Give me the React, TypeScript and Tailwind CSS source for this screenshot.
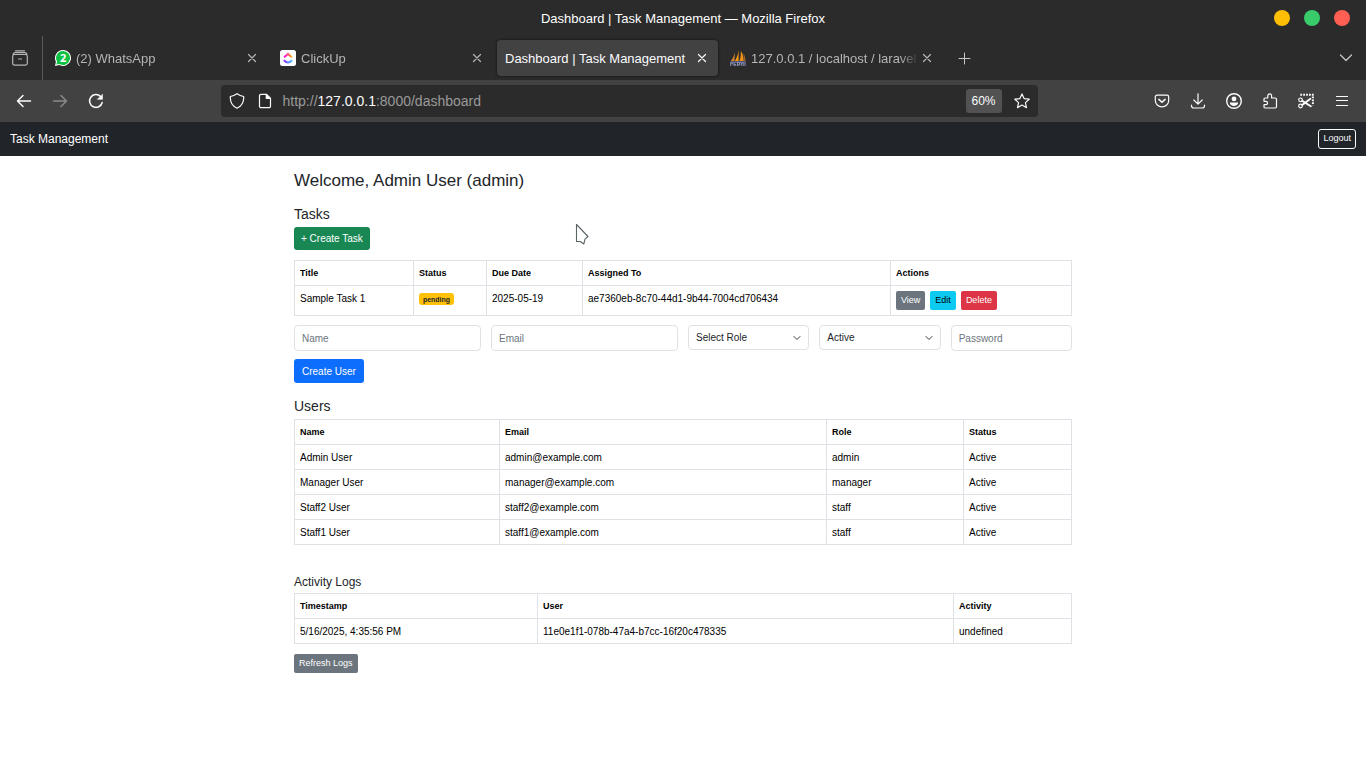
import React from "react";

type IconProps = { children: React.ReactNode; className?: string };

function Icon({ children, className = "" }: IconProps) {
  return (
    <svg
      aria-hidden="true"
      viewBox="0 0 16 16"
      className={`h-4 w-4 shrink-0 ${className}`}
      fill="none"
      stroke="currentColor"
      strokeWidth="1.2"
      strokeLinecap="round"
      strokeLinejoin="round"
    >
      {children}
    </svg>
  );
}

function IconButton({
  label,
  disabled,
  children,
}: {
  label: string;
  disabled?: boolean;
  children: React.ReactNode;
}) {
  return (
    <button
      type="button"
      aria-label={label}
      disabled={disabled}
      className="flex h-8 w-9 shrink-0 items-center justify-center text-[#fbfbfe] disabled:text-[#8a8a8c]"
    >
      <Icon>{children}</Icon>
    </button>
  );
}

const whatsAppIcon = (
  <svg aria-hidden="true" viewBox="0 0 16 16" className="h-4 w-4 shrink-0">
    <path d="M8 0a8 8 0 1 1-3.7 15.1L0 16l.9-4.2A8 8 0 0 1 8 0Z" fill="#fff" />
    <path d="M8.1 1.1a6.9 6.9 0 1 1-3.6 12.8l-3.1.7.7-3A6.9 6.9 0 0 1 8.1 1.1Z" fill="#0fc143" />
    <text x="8.1" y="11.8" textAnchor="middle" fontFamily="Open Sans, sans-serif" fontWeight="700" fontSize="11" fill="#fff">
      2
    </text>
  </svg>
);

const clickUpIcon = (
  <svg aria-hidden="true" viewBox="0 0 16 16" className="h-4 w-4 shrink-0">
    <defs>
      <linearGradient id="cuTop" x1="0" x2="1">
        <stop offset="0" stopColor="#ff02f0" />
        <stop offset="1" stopColor="#ffb000" />
      </linearGradient>
      <linearGradient id="cuBottom" x1="0" x2="1">
        <stop offset="0" stopColor="#8930fd" />
        <stop offset="1" stopColor="#49ccf9" />
      </linearGradient>
    </defs>
    <rect width="16" height="16" rx="2.5" fill="#fff" />
    <path d="M4.2 7.2 8 3.9l3.8 3.3" fill="none" stroke="url(#cuTop)" strokeWidth="2.1" />
    <path d="M3.9 10.2c2.2 3 6 3 8.2 0" fill="none" stroke="url(#cuBottom)" strokeWidth="2.1" />
  </svg>
);

const phpMyAdminIcon = (
  <svg aria-hidden="true" viewBox="0 0 16 16" className="h-4 w-4 shrink-0">
    <path d="M5 2.500 4.300 11H.8C2.700 9 4 6 5 2.500Z" fill="#d98a2b" />
    <path d="M8.600 0v11H4.800C7 8 8 4 8.600 0Z" fill="#f89c0e" />
    <path d="M10.800 1c2 2.500 2.800 6 2.900 10H9.400C10.600 8 11 4.500 10.800 1Z" fill="#f0901a" />
    <path d="M13.400 3c1.300 2 2 5 2.200 8.200h-1.300Z" fill="#a5682b" />
    <path d="M0 11.300h15.700V13H.6Z" fill="#5c6390" />
    <path d="M.7 16v-3.200h1.600v1.700M4 16v-3.500M4 14.300h1.700V16M7.500 16v-3.500h2V15h-2M11.200 16v-3h2v3M15 12.500V16" fill="none" stroke="#9a9fc4" strokeWidth=".9" />
  </svg>
);

type Tab = { title: string; icon?: React.ReactNode; active?: boolean };

const tabs: Tab[] = [
  { title: "(2) WhatsApp", icon: whatsAppIcon },
  { title: "ClickUp", icon: clickUpIcon },
  { title: "Dashboard | Task Management", active: true },
  { title: "127.0.0.1 / localhost / laravel", icon: phpMyAdminIcon },
];

function BrowserTab({ title, icon, active }: Tab) {
  return (
    <div
      className={`flex h-9 w-[221px] items-center rounded px-2 ${
        active ? "bg-[#424242] text-[#fbfbfe] shadow-[0_0_3px_#000000aa]" : "text-[#b5b5b5]"
      }`}
    >
      {icon}
      <span
        className={`min-w-0 flex-1 overflow-hidden whitespace-nowrap pt-[2px] text-[13px] leading-5 ${
          icon ? "ml-[5px] [mask-image:linear-gradient(to_left,transparent,black_20px)]" : ""
        }`}
      >
        {title}
      </span>
      <button type="button" aria-label={`Close ${title}`} className="shrink-0">
        <Icon>
          <path d="m4.500 4.500 7 7M11.500 4.500l-7 7" />
        </Icon>
      </button>
    </div>
  );
}

function BrowserChrome() {
  return (
    <header className="bg-[#2b2b2b]">
      <div className="grid h-9 grid-cols-[1fr_auto_1fr] items-center">
        <span />
        <span className="pt-[2px] text-[13px] leading-5 text-white">Dashboard | Task Management — Mozilla Firefox</span>
        <div className="flex justify-end gap-[14px] pr-4">
          <button type="button" aria-label="Minimize" className="h-4 w-4 rounded-full bg-[#fdbe04]" />
          <button type="button" aria-label="Maximize" className="h-4 w-4 rounded-full bg-[#39ca6a]" />
          <button type="button" aria-label="Close window" className="h-4 w-4 rounded-full bg-[#ff5f52]" />
        </div>
      </div>

      <div className="flex h-11 items-center">
        <div className="flex h-full w-[43px] items-center justify-center border-r border-[#5a5a5a] text-[#b5b5b5]">
          <button type="button" aria-label="Recent browsing" className="pr-[3px]">
            <Icon>
              <path d="M3.500.8h9M2.500 4.500h11c1.200 0 1.800.6 1.800 1.800v7c0 1.200-.6 1.800-1.800 1.800h-11c-1.200 0-1.800-.6-1.800-1.800v-7c0-1.200.6-1.800 1.800-1.800ZM1.200 4.600c0-1.400.7-2 2-2h9.600c1.300 0 2 .6 2 2M6.700 9h2.800" />
            </Icon>
          </button>
        </div>
        <nav aria-label="Tabs" className="ml-1 flex gap-1">
          {tabs.map((tab) => (
            <BrowserTab key={tab.title} {...tab} />
          ))}
        </nav>
        <button type="button" aria-label="New tab" className="ml-[13px] text-[#c8c8c8]">
          <Icon>
            <path d="M8.500 3v11M3 8.500h11" strokeWidth="1" />
          </Icon>
        </button>
        <button type="button" aria-label="List all tabs" className="ml-auto mr-3 text-[#c8c8c8]">
          <Icon>
            <path d="m2.500 5 5.500 5.500L13.500 5" />
          </Icon>
        </button>
      </div>

      <div className="flex h-[42px] items-center bg-[#424242] px-[6px]">
        <IconButton label="Back">
          <path d="M14.500 8h-13M7 2.500 1.500 8 7 13.500" strokeWidth="1.500" />
        </IconButton>
        <IconButton label="Forward" disabled>
          <path d="M1.500 8h13M9 2.500 14.500 8 9 13.500" strokeWidth="1.500" />
        </IconButton>
        <IconButton label="Reload">
          <path d="M14.200 9.500A6.400 6.400 0 1 1 12.600 3.500" strokeWidth="1.500" />
          <path d="M14.500 1.500v4.800H9.700Z" fill="currentColor" strokeWidth=".6" />
        </IconButton>
        <div className="flex-1" />
        <div className="flex h-8 max-w-[817px] flex-[8] items-center rounded bg-[#2b2b2b] px-2 text-[#fbfbfe]">
          <button type="button" aria-label="Tracking protection">
            <Icon>
              <path d="M8 .7c2.200 1.600 4.400 2.400 6.700 2.800.3 5.500-2 9.600-6.700 11.700C3.300 13.100 1 9 1.300 3.500 3.600 3.100 5.800 2.300 8 .7Z" />
            </Icon>
          </button>
          <button type="button" aria-label="Site information" className="ml-3">
            <Icon>
              <path d="M9.500 1.300H4A1.500 1.500 0 0 0 2.500 2.800v10.400A1.500 1.500 0 0 0 4 14.700h8a1.500 1.500 0 0 0 1.500-1.500V5.300Z" />
              <path d="M9.300 1.500v4h4Z" fill="currentColor" />
            </Icon>
          </button>
          <div
            role="textbox"
            aria-label="Address"
            tabIndex={0}
            className="ml-[10px] flex-1 text-[14px] leading-5 text-[#9a9a9a]"
          >
            http://<span className="text-[#fbfbfe]">127.0.0.1</span>:8000/dashboard
          </div>
          <button type="button" className="h-6 w-9 rounded-[3px] bg-[#525252] text-[12px]">
            60%
          </button>
          <button type="button" aria-label="Bookmark this page" className="ml-3">
            <Icon>
              <path d="m8 .9 2.100 4.700 5.100.6-3.800 3.400 1.100 5.100L8 12.100l-4.500 2.600 1.100-5.100L.8 6.200l5.100-.6Z" />
            </Icon>
          </button>
        </div>
        <div className="flex-1" />
        <IconButton label="Save to Pocket">
          <path d="M3 2.200h10c1.100 0 1.700.6 1.700 1.700v3.600a6.700 6.300 0 0 1-13.400 0V3.900c0-1.100.6-1.700 1.700-1.700Z" />
          <path d="M4.900 6.400 8 9.300l3.100-2.900" strokeWidth="1.500" />
        </IconButton>
        <IconButton label="Downloads">
          <path d="M8 .8v10.200M3.800 7 8 11.200 12.200 7M1.500 12v.8c0 1.500.8 2.200 2.200 2.200h8.600c1.400 0 2.200-.7 2.200-2.200V12" />
        </IconButton>
        <IconButton label="Account">
          <circle cx="8" cy="8" r="7.300" strokeWidth="1.400" />
          <circle cx="8" cy="5.900" r="2.400" fill="currentColor" stroke="none" />
          <path d="M3.800 9.500h8.400c0 2.300-2 3.500-4.200 3.500s-4.200-1.200-4.200-3.500Z" fill="currentColor" stroke="none" />
        </IconButton>
        <IconButton label="Extensions">
          <path d="M2 8.300V6.200c0-.8.400-1.200 1.200-1.200h2.600V2.800a1.900 1.900 0 0 1 3.800 0V5h3.700c.8 0 1.200.4 1.200 1.200v7.600c0 .8-.4 1.200-1.200 1.200H3.200C2.400 15 2 14.600 2 13.800v-2.100h1.900a1.700 1.700 0 0 0 0-3.400Z" />
        </IconButton>
        <IconButton label="Screenshot">
          <path d="M2.300 1.800h13.500M14.900 3.500v9" strokeWidth="2" strokeDasharray="1.800 1.100" strokeLinecap="butt" />
          <circle cx="2.500" cy="6.800" r="1.800" />
          <circle cx="2.500" cy="13" r="1.800" />
          <path d="m4.200 7.900 8.600 5.300M4.200 11.900l8.200-6.200" strokeWidth="1.900" />
        </IconButton>
        <IconButton label="Application menu">
          <path d="M2.500 3.500h11M2.500 7.500h11M2.500 12.500h11" />
        </IconButton>
      </div>
    </header>
  );
}

type TableProps = { label: string; widths: string[]; head: string[]; rows: React.ReactNode[][] };

function DataTable({ label, widths, head, rows }: TableProps) {
  return (
    <table aria-label={label} className="w-full table-fixed border-collapse text-[10px] leading-[15px] text-black">
      <thead>
        <tr>
          {head.map((h, i) => (
            <th
              key={h}
              scope="col"
              className={`border border-[#dee2e6] px-[5px] pb-1 pt-[5px] text-left text-[9px] font-bold ${widths[i]}`}
            >
              {h}
            </th>
          ))}
        </tr>
      </thead>
      <tbody>
        {rows.map((row, r) => (
          <tr key={r}>
            {row.map((cell, c) => (
              <td key={c} className="border border-[#dee2e6] px-[5px] pb-1 pt-[5px] align-top">
                {cell}
              </td>
            ))}
          </tr>
        ))}
      </tbody>
    </table>
  );
}

const fieldClass =
  "w-full rounded border border-[#dee2e6] bg-white px-[7px] text-[10px] leading-[14px] text-[#212529] placeholder:text-[#6c757d]";

function Field({ label, type }: { label: string; type: string }) {
  return <input type={type} aria-label={label} placeholder={label} className={`${fieldClass} h-[26px]`} />;
}

function SelectField({ label, options }: { label: string; options: string[] }) {
  return (
    <div className="relative self-start">
      <select aria-label={label} className={`${fieldClass} block h-[25px] appearance-none pr-6`}>
        {options.map((o) => (
          <option key={o}>{o}</option>
        ))}
      </select>
      <svg
        aria-hidden="true"
        viewBox="0 0 16 16"
        className="pointer-events-none absolute right-2 top-[9px] h-2 w-2"
        fill="none"
        stroke="#343a40"
        strokeWidth="2"
        strokeLinecap="round"
        strokeLinejoin="round"
      >
        <path d="m2 5 6 6 6-6" />
      </svg>
    </div>
  );
}

const smallButton = "h-[19px] rounded-[2px] px-[5px] text-[9px] leading-[19px]";

const taskRows: React.ReactNode[][] = [
  [
    "Sample Task 1",
    <span className="mt-[2px] flex h-3 w-[35px] items-center justify-center rounded-[3px] bg-[#ffc107] text-[7px] font-bold text-[#212529]">
      pending
    </span>,
    "2025-05-19",
    "ae7360eb-8c70-44d1-9b44-7004cd706434",
    <div className="flex gap-[5px] pb-px">
      <button type="button" className={`${smallButton} bg-[#6c757d] text-white`}>
        View
      </button>
      <button type="button" className={`${smallButton} bg-[#0dcaf0] text-black`}>
        Edit
      </button>
      <button type="button" className={`${smallButton} bg-[#dc3545] text-white`}>
        Delete
      </button>
    </div>,
  ],
];

const userRows = [
  ["Admin User", "admin@example.com", "admin", "Active"],
  ["Manager User", "manager@example.com", "manager", "Active"],
  ["Staff2 User", "staff2@example.com", "staff", "Active"],
  ["Staff1 User", "staff1@example.com", "staff", "Active"],
];

const logRows = [["5/16/2025, 4:35:56 PM", "11e0e1f1-078b-47a4-b7cc-16f20c478335", "undefined"]];

export default function App() {
  return (
    <div className="min-h-screen bg-white font-['Liberation_Sans',Arial,sans-serif] text-[#212529]">
      <BrowserChrome />

      <nav className="flex h-[34px] items-center justify-between bg-[#212529] px-[10px]">
        <a href="/dashboard" className="text-[12px] leading-4 text-white">
          Task Management
        </a>
        <button type="button" className="h-5 rounded-[3px] border border-[#f8f9fa] px-1 text-[9px] text-[#f8f9fa]">
          Logout
        </button>
      </nav>

      <main className="mx-auto w-full max-w-[778px] pt-[15px]">
        <h1 className="text-[17px] leading-5">Welcome, Admin User (admin)</h1>

        <h2 className="mt-[14px] text-[14px] leading-[18px]">Tasks</h2>
        <button type="button" className="mt-1 block h-[23px] rounded-[3px] bg-[#198754] px-[7px] text-[10px] text-white">
          + Create Task
        </button>

        <div className="mt-[10px]">
          <DataTable
            label="Tasks"
            widths={["w-[119px]", "w-[73px]", "w-[96px]", "", "w-[181px]"]}
            head={["Title", "Status", "Due Date", "Assigned To", "Actions"]}
            rows={taskRows}
          />
        </div>

        <form className="mt-[9px]" onSubmit={(e) => e.preventDefault()}>
          <div className="grid grid-cols-12 gap-[10px]">
            <div className="col-span-3 flex">
              <Field label="Name" type="text" />
            </div>
            <div className="col-span-3 flex">
              <Field label="Email" type="email" />
            </div>
            <div className="col-span-2">
              <SelectField label="Role" options={["Select Role", "admin", "manager", "staff"]} />
            </div>
            <div className="col-span-2">
              <SelectField label="Status" options={["Active", "Inactive"]} />
            </div>
            <div className="col-span-2 flex">
              <Field label="Password" type="password" />
            </div>
          </div>
          <button type="submit" className="mt-2 block h-6 rounded-[3px] bg-[#0d6efd] px-2 text-[10px] text-white">
            Create User
          </button>
        </form>

        <h2 className="mt-[14px] text-[14px] leading-[18px]">Users</h2>
        <div className="mt-1">
          <DataTable
            label="Users"
            widths={["w-[205px]", "", "w-[137px]", "w-[108px]"]}
            head={["Name", "Email", "Role", "Status"]}
            rows={userRows}
          />
        </div>

        <h3 className="mt-[29px] text-[12px] leading-4">Activity Logs</h3>
        <div className="mt-[3px]">
          <DataTable
            label="Activity Logs"
            widths={["w-[243px]", "", "w-[118px]"]}
            head={["Timestamp", "User", "Activity"]}
            rows={logRows}
          />
        </div>
        <button type="button" className={`mt-[10px] block bg-[#6c757d] text-white ${smallButton}`}>
          Refresh Logs
        </button>
      </main>

      <svg
        aria-hidden="true"
        viewBox="0 0 14 22"
        className="pointer-events-none absolute left-[575px] top-[223px] h-[22px] w-[14px]"
        fill="#fff"
        stroke="#5c6366"
        strokeWidth="1.100"
        strokeLinejoin="round"
      >
        <path d="M1.500 1.500v17h3.700l3.600 2.500 1.200-4.800 3-2.700Z" />
      </svg>
    </div>
  );
}
